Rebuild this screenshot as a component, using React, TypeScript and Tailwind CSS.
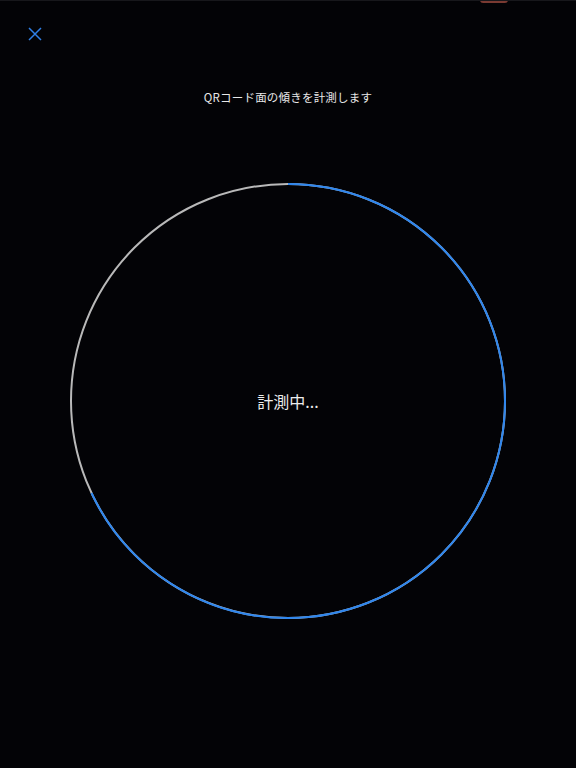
import React from 'react';

const RADIUS = 217;
const CIRC = 2 * Math.PI * RADIUS;
const progress = 0.68;

export default function App() {
  return (
    <div
      className="relative w-full h-[768px] bg-[#030306] border-t border-[#17171b] flex flex-col items-center overflow-hidden"
      style={{ fontFamily: '"Noto Sans CJK JP", "Noto Sans", sans-serif' }}
    >
      {/* top indicator */}
      <div className="absolute top-[-1px] left-[480px] w-[28px] h-[3px] rounded-b-sm bg-[#7a3a32]" />

      <div className="w-full pt-[26px] pl-[28px]">
        <button className="block w-[14px] h-[14px] text-[#2f7fe6]" aria-label="close">
          <svg className="block" viewBox="0 0 14 14" width="14" height="14" fill="none" stroke="currentColor" strokeWidth="1.5">
            <path d="M1 1 L13 13 M13 1 L1 13" />
          </svg>
        </button>
      </div>

      <p className="mt-[48px] text-[11.5px] leading-4 tracking-[0.2px] text-[#e8e8e8]">QRコード面の傾きを計測します</p>

      <div className="relative mt-[78px] w-[436px] h-[436px]">
        <svg className="block" width="436" height="436" viewBox="0 0 436 436">
          <circle cx="218" cy="218" r={RADIUS} fill="none" stroke="#b9b9b9" strokeWidth="2" />
          <circle
            cx="218"
            cy="218"
            r={RADIUS}
            fill="none"
            stroke="#2e86ee"
            strokeWidth="2"
            strokeDasharray={`${CIRC * progress} ${CIRC}`}
            transform="rotate(-90 218 218)"
          />
        </svg>
        <div className="absolute inset-0 flex items-center justify-center">
          <span className="text-[16px] text-[#ececec]">計測中...</span>
        </div>
      </div>
    </div>
  );
}
